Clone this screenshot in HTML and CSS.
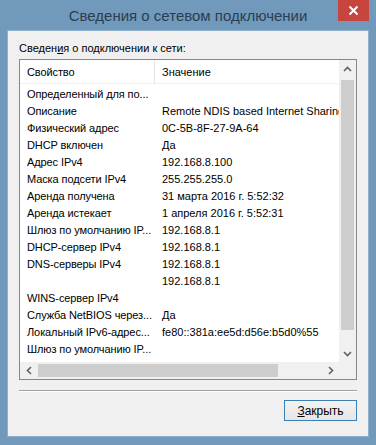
FILE: index.html
```html
<!DOCTYPE html>
<html lang="ru">
<head>
    <meta charset="UTF-8">
    <meta name="viewport" content="width=device-width, initial-scale=1.0">
    <title>Сведения о сетевом подключении</title>
    <link rel="stylesheet" href="styles.css">
</head>
<body>

<div class="window">
    <div class="titlebar">
        <span class="title">Сведения о сетевом подключении</span>
        <button class="close-btn">
            <svg width="11" height="11" viewBox="0 0 11 11"><path d="M1.5 1.5 L9.5 9.5 M9.5 1.5 L1.5 9.5" stroke="#fff" stroke-width="2"/></svg>
        </button>
    </div>

    <div class="client">
        <div class="caption">Сведен<u>и</u>я о подключении к сети:</div>

        <div class="listbox">
            <div class="list-view">
                <div class="list-head">
                    <span class="col-prop">Свойство</span>
                    <span class="col-val">Значение</span>
                </div>
                <div class="list-rows">
                    <div class="row"><span class="col-prop">Определенный для по...</span><span class="col-val"></span></div>
                    <div class="row"><span class="col-prop">Описание</span><span class="col-val">Remote NDIS based Internet Sharing</span></div>
                    <div class="row"><span class="col-prop">Физический адрес</span><span class="col-val">0C-5B-8F-27-9A-64</span></div>
                    <div class="row"><span class="col-prop">DHCP включен</span><span class="col-val">Да</span></div>
                    <div class="row"><span class="col-prop">Адрес IPv4</span><span class="col-val">192.168.8.100</span></div>
                    <div class="row"><span class="col-prop">Маска подсети IPv4</span><span class="col-val">255.255.255.0</span></div>
                    <div class="row"><span class="col-prop">Аренда получена</span><span class="col-val">31 марта 2016 г. 5:52:32</span></div>
                    <div class="row"><span class="col-prop">Аренда истекает</span><span class="col-val">1 апреля 2016 г. 5:52:31</span></div>
                    <div class="row"><span class="col-prop">Шлюз по умолчанию IP...</span><span class="col-val">192.168.8.1</span></div>
                    <div class="row"><span class="col-prop">DHCP-сервер IPv4</span><span class="col-val">192.168.8.1</span></div>
                    <div class="row"><span class="col-prop">DNS-серверы IPv4</span><span class="col-val">192.168.8.1</span></div>
                    <div class="row"><span class="col-prop"></span><span class="col-val">192.168.8.1</span></div>
                    <div class="row"><span class="col-prop">WINS-сервер IPv4</span><span class="col-val"></span></div>
                    <div class="row"><span class="col-prop">Служба NetBIOS через...</span><span class="col-val">Да</span></div>
                    <div class="row"><span class="col-prop">Локальный IPv6-адрес...</span><span class="col-val">fe80::381a:ee5d:d56e:b5d0%55</span></div>
                    <div class="row"><span class="col-prop">Шлюз по умолчанию IP...</span><span class="col-val"></span></div>
                    <div class="row"><span class="col-prop">DNS-серверы IPv6</span><span class="col-val"></span></div>
                </div>
            </div>

            <!-- vertical scrollbar -->
            <div class="vscroll">
                <div class="arrow">
                    <svg width="9" height="6" viewBox="0 0 9 6"><path d="M1 5 L4.5 1.5 L8 5" fill="none" stroke="#606060" stroke-width="1.6"/></svg>
                </div>
                <div class="vthumb"></div>
                <div class="arrow">
                    <svg width="9" height="6" viewBox="0 0 9 6"><path d="M1 1 L4.5 4.5 L8 1" fill="none" stroke="#606060" stroke-width="1.6"/></svg>
                </div>
            </div>

            <!-- horizontal scrollbar -->
            <div class="hscroll">
                <div class="arrow">
                    <svg width="6" height="9" viewBox="0 0 6 9"><path d="M5 1 L1.5 4.5 L5 8" fill="none" stroke="#606060" stroke-width="1.6"/></svg>
                </div>
                <div class="hthumb"></div>
                <div class="arrow">
                    <svg width="6" height="9" viewBox="0 0 6 9"><path d="M1 1 L4.5 4.5 L1 8" fill="none" stroke="#606060" stroke-width="1.6"/></svg>
                </div>
            </div>
            <div class="corner"></div>
        </div>

        <div class="separator"></div>

        <div class="footer">
            <button class="btn"><u>З</u>акрыть</button>
        </div>
    </div>
</div>

</body>
</html>
```

FILE: styles.css
```css
body {
    margin: 0;
    font-family: "Liberation Sans", Arial, sans-serif;
}

.window {
    width: 376px;
    height: 445px;
    box-sizing: border-box;
    padding: 0 8px 9px;
    background-color: #7099bc;
    display: flex;
    flex-direction: column;
}

.titlebar {
    height: 31px;
    position: relative;
    display: flex;
    align-items: center;
    justify-content: center;
}
.title {
    font-size: 15px;
    color: #2c3d50;
    margin-top: -1px;
}
.close-btn {
    position: absolute;
    top: 0;
    right: -1px;
    width: 31px;
    height: 21px;
    padding: 0;
    border: none;
    background-color: #c7453f;
    display: flex;
    align-items: center;
    justify-content: center;
}

.client {
    flex: 1;
    background-color: #f0f0f0;
    box-shadow: 0 0 0 1px #8fb0cb;
    padding: 10px 11px 0;
    font-size: 11px;
    color: #000;
    display: flex;
    flex-direction: column;
}
.caption {
    line-height: 15px;
    margin-bottom: 3px;
}

/* list view with scrollbars */
.listbox {
    height: 321px;
    box-sizing: border-box;
    border: 1px solid #828790;
    background-color: #fff;
    display: grid;
    grid-template-columns: 1fr 17px;
    grid-template-rows: 1fr 17px;
}
.list-view {
    overflow: hidden;
}
.list-head {
    height: 24px;
    display: flex;
    align-items: center;
    border-bottom: 1px solid #f0f0f0;
    box-sizing: border-box;
}
.list-head .col-prop {
    width: 127px;
    border-right: 1px solid #e5e5e5;
    height: 24px;
    line-height: 24px;
}
.list-rows {
    padding-top: 2px;
}
.row {
    display: flex;
    height: 17px;
    line-height: 17px;
    white-space: nowrap;
}
.col-prop {
    width: 128px;
    padding-left: 7px;
    flex-shrink: 0;
    letter-spacing: -0.1px;
}
.col-val {
    padding-left: 7px;
}

.vscroll {
    background-color: #f0f0f0;
    display: flex;
    flex-direction: column;
    align-items: center;
}
.vscroll .arrow {
    height: 17px;
    width: 17px;
}
.vthumb {
    margin-top: 3px;
    width: 13px;
    height: 250px;
    background-color: #cdcdcd;
}
.vscroll .arrow:last-child {
    margin-top: auto;
}

.hscroll {
    background-color: #f0f0f0;
    display: flex;
    align-items: center;
}
.hscroll .arrow {
    width: 17px;
    height: 17px;
}
.hthumb {
    margin-left: 1px;
    width: 240px;
    height: 13px;
    background-color: #cdcdcd;
}
.hscroll .arrow:last-child {
    margin-left: auto;
}
.arrow {
    display: flex;
    align-items: center;
    justify-content: center;
}
.corner {
    background-color: #f0f0f0;
}

.separator {
    margin-top: 10px;
    border-top: 1px solid #a0a0a0;
    border-bottom: 1px solid #fff;
}

.footer {
    display: flex;
    justify-content: flex-end;
    margin-top: 8px;
}
.btn {
    width: 73px;
    height: 21px;
    padding: 0;
    font-family: inherit;
    font-size: 12px;
    color: #000;
    border: 1px solid #3c7fb1;
    background: linear-gradient(#f2f2f2, #e6e6e6);
}
```
